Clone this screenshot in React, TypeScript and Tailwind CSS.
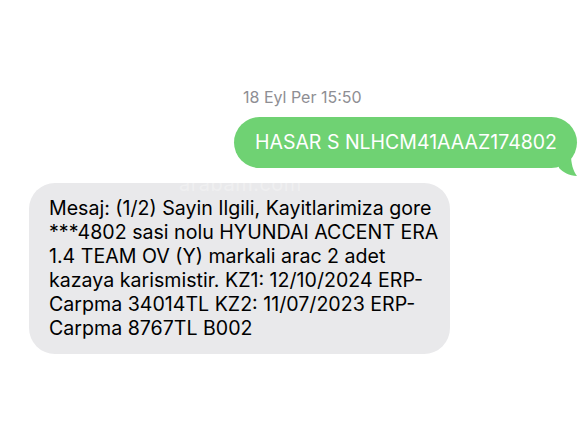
export default function App() {
  return (
    <div className="w-[580px] h-[435px] bg-white overflow-hidden" style={{ fontFamily: 'Inter, "Liberation Sans", sans-serif' }}>
      <div className="pt-[88px] pl-[243px] text-[16px] leading-[18px] text-[#8e8e93]">18 Eyl Per 15:50</div>

      <div className="mt-[11px] flex justify-end pr-[3px]">
        <div className="relative">
          <div className="relative z-10 h-[51px] rounded-[26px] bg-[#6fd273] pl-[21px] pr-[20px] flex items-center text-[19.5px] text-white">
            HASAR S NLHCM41AAAZ174802
          </div>
          {/* bubble tail */}
          <svg className="absolute right-[-2px] bottom-[-9px]" width="24" height="22" viewBox="0 0 24 22">
            <path d="M2 0 H16 C16 8 18 16 22 21 C14 21 8 17 4 13 Z" fill="#6fd273" />
          </svg>
        </div>
      </div>

      <div className="relative mt-[15px] ml-[29px] w-[421px] rounded-[26px] bg-[#e9e9eb] pt-[13px] pb-[14px] pl-[20px] pr-[4px] text-[19.6px] leading-[24px] text-black">
        <span className="absolute left-[150px] top-[-9px] text-[20px] leading-[20px] text-white/30 tracking-wide">arabam.com</span>
        <p className="relative">
          Mesaj: (1/2) Sayin Ilgili, Kayitlarimiza gore
          <br />
          ***4802 sasi nolu HYUNDAI ACCENT ERA
          <br />
          1.4 TEAM OV (Y) markali arac 2 adet
          <br />
          kazaya karismistir. KZ1: 12/10/2024 ERP-
          <br />
          Carpma 34014TL KZ2: 11/07/2023 ERP-
          <br />
          Carpma 8767TL B002
        </p>
      </div>
    </div>
  )
}
